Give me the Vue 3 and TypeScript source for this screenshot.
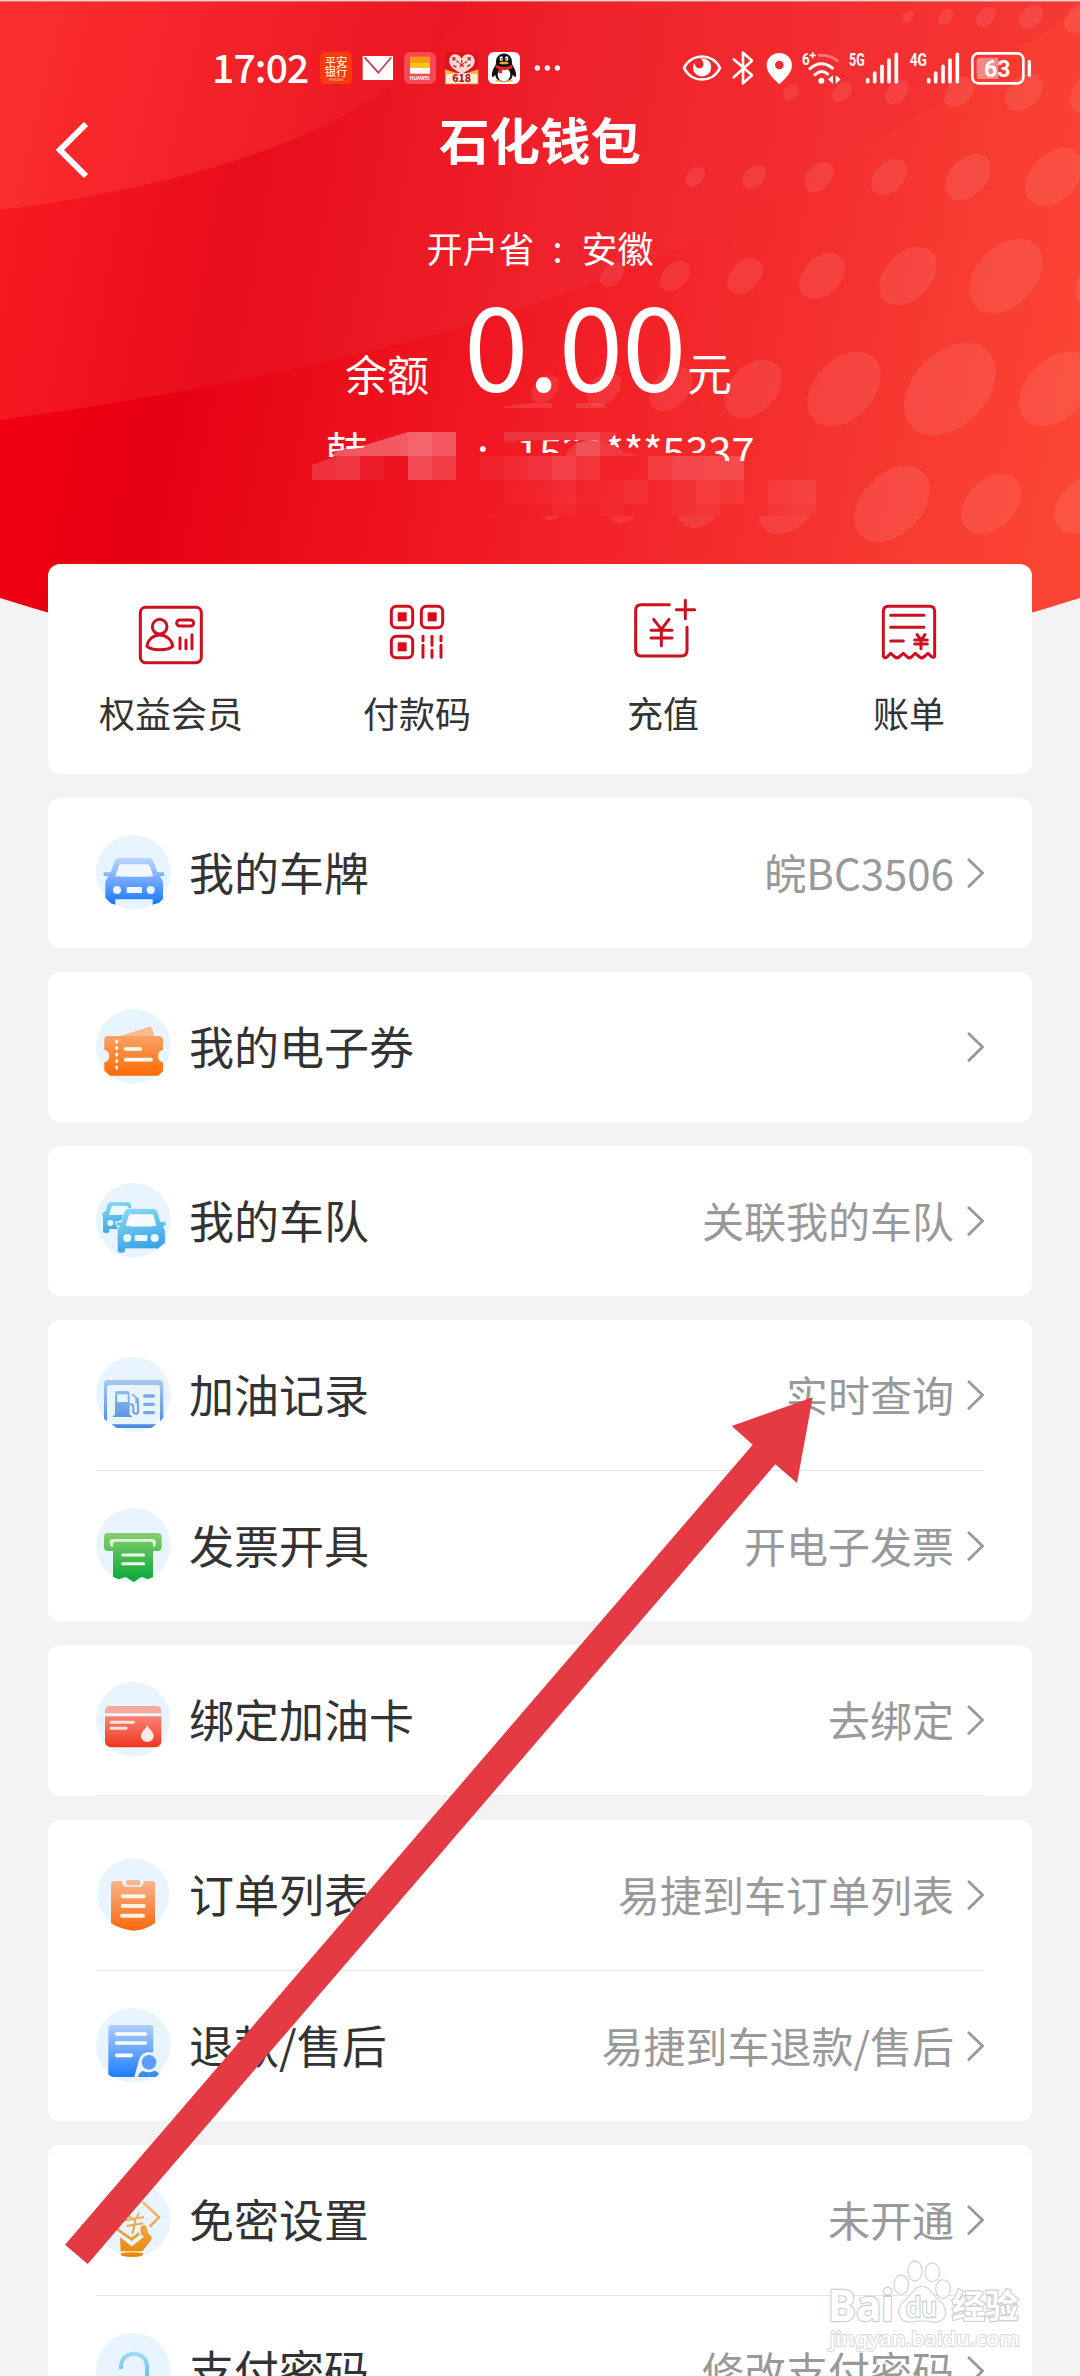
<script setup lang="ts">
interface Row {
  icon: string
  label: string
  value: string
}
interface Group {
  rows: Row[]
  trailingLine?: boolean
}

const quick = [
  { icon: 'member', label: '权益会员' },
  { icon: 'qr', label: '付款码' },
  { icon: 'topup', label: '充值' },
  { icon: 'bill', label: '账单' },
]

const groups: Group[] = [
  { rows: [{ icon: 'car', label: '我的车牌', value: '皖BC3506' }] },
  { rows: [{ icon: 'ticket', label: '我的电子券', value: '' }] },
  { rows: [{ icon: 'fleet', label: '我的车队', value: '关联我的车队' }] },
  {
    rows: [
      { icon: 'fuel', label: '加油记录', value: '实时查询' },
      { icon: 'invoice', label: '发票开具', value: '开电子发票' },
    ],
  },
  { rows: [{ icon: 'card', label: '绑定加油卡', value: '去绑定' }], trailingLine: true },
  {
    rows: [
      { icon: 'order', label: '订单列表', value: '易捷到车订单列表' },
      { icon: 'refund', label: '退款/售后', value: '易捷到车退款/售后' },
    ],
  },
  {
    rows: [
      { icon: 'nopwd', label: '免密设置', value: '未开通' },
      { icon: 'lock', label: '支付密码', value: '修改支付密码' },
    ],
  },
]

// halftone dots of the header: x, y, radius
const dots: number[][] = [
  [908, 17, 6], [946, 17, 8], [986, 17, 10], [1031, 17, 12], [1079, 18, 15],
  [791, 92, 8], [842, 92, 10], [897, 92, 12], [959, 92, 15], [1024, 92, 19], [1092, 92, 22],
  [695, 177, 10], [754, 177, 12], [819, 177, 15], [889, 177, 18], [968, 177, 23], [1054, 177, 29],
  [612, 275, 12], [675, 276, 15], [745, 276, 18], [822, 276, 23], [908, 276, 29], [1006, 276, 37], [1114, 276, 38],
  [545, 389, 14], [604, 389, 17], [671, 389, 22], [753, 389, 29], [844, 389, 37], [950, 389, 46], [1056, 389, 37],
  [892, 504, 38], [991, 504, 30], [1083, 504, 29],
]
const lowDots: number[][] = [
  [494, 504, 13], [555, 504, 16], [627, 504, 19], [702, 504, 24], [789, 504, 30],
]

// privacy mosaic: column, row, opacity
const cells: number[][] = [
  [2, 1, 0.05], [4, 1, 0.23], [5, 1, 0.16], [7, 1, 0.04], [8, 1, 0.07], [9, 1, 0.1], [10, 1, 0.15],
  [11, 1, 0.09], [14, 1, 0.1], [15, 1, 0.15], [16, 1, 0.15], [17, 1, 0.15], [1, 1, 0.17],
  [4, 0, 0.34], [5, 0, 0.29],
  [8, 2, 0.02], [9, 2, 0.03], [10, 2, 0.06], [11, 2, 0.02], [12, 2, 0.02], [13, 2, 0.06], [15, 2, 0.04],
  [16, 2, 0.08], [17, 2, 0.06], [19, 2, 0.05], [20, 2, 0.08],
  [10, 3, 0.04], [12, 3, 0.03], [15, 3, 0.04], [16, 3, 0.06], [19, 3, 0.04], [20, 3, 0.05],
]
</script>

<template>
  <div class="page">
    <svg class="hero" width="1080" height="700" viewBox="0 0 1080 700">
      <defs>
        <linearGradient id="base" gradientUnits="userSpaceOnUse" x1="0" y1="420" x2="1090" y2="640">
          <stop offset="0" stop-color="#f20012" />
          <stop offset="0.13" stop-color="#e60012" />
          <stop offset="0.25" stop-color="#ea0a18" />
          <stop offset="0.5" stop-color="#f21e26" />
          <stop offset="0.8" stop-color="#f63931" />
          <stop offset="1" stop-color="#fd4834" />
        </linearGradient>
        <linearGradient id="band" gradientUnits="userSpaceOnUse" x1="0" y1="180" x2="1000" y2="360">
          <stop offset="0" stop-color="#f71a20" />
          <stop offset="0.24" stop-color="#e80d1b" />
          <stop offset="0.55" stop-color="#ef222b" />
          <stop offset="1" stop-color="#f63833" />
        </linearGradient>
        <linearGradient id="corner" gradientUnits="userSpaceOnUse" x1="0" y1="0" x2="440" y2="110">
          <stop offset="0" stop-color="#fc2e2d" />
          <stop offset="1" stop-color="#ea1624" />
        </linearGradient>
        <clipPath id="shape"><path d="M0 0H1080V598Q540 770 0 598Z" /></clipPath>
        <clipPath id="low"><rect x="0" y="516" width="1080" height="60" /></clipPath>
      </defs>
      <g clip-path="url(#shape)">
        <rect width="1080" height="700" fill="url(#base)" />
        <path d="M0 0H1080V8Q950 96 792 190Q540 345 0 420Z" fill="url(#band)" />
        <path d="M0 0H468Q385 160 0 210Z" fill="url(#corner)" />
        <g fill="#fff" fill-opacity="0.085">
          <ellipse v-for="(d, i) in dots" :key="i" :rx="d[2] * 1.17" :ry="d[2] * 0.8"
            :transform="`translate(${d[0]} ${d[1]}) rotate(-46)`" />
          <g clip-path="url(#low)">
            <ellipse v-for="(d, i) in lowDots" :key="i" :rx="d[2] * 1.17" :ry="d[2] * 0.8"
              :transform="`translate(${d[0]} ${d[1]}) rotate(-46)`" />
          </g>
        </g>
        <rect width="1080" height="1.4" fill="#f3d6d6" />
      </g>
    </svg>

    <header class="top">
      <div class="status">
        <span class="time">17:02</span>
        <svg width="250" height="60" viewBox="345 0 750 180">
          <rect x="360" y="36" width="96" height="96" rx="16" fill="#fb3a0c" />
          <text class="cn" x="408" y="78" font-size="34" font-weight="500" fill="#ffe9c8" text-anchor="middle">平安</text>
          <text class="cn" x="408" y="109" font-size="34" font-weight="500" fill="#ffe9c8" text-anchor="middle">银行</text>
          <text class="cn" x="408" y="124" font-size="12" fill="#ffd0a0" text-anchor="middle">PINGAN</text>
          <rect x="488" y="48" width="91" height="72" fill="#fff" />
          <path d="M494 52L535 98L574 52" fill="none" stroke="#c23b4c" stroke-width="5" />
          <rect x="612" y="36" width="96" height="96" rx="18" fill="#fb4858" />
          <rect x="630" y="50" width="60" height="17" fill="#f59a10" />
          <rect x="630" y="67" width="60" height="17" fill="#fcc419" />
          <rect x="630" y="84" width="60" height="17" fill="#fff" />
          <text class="cn" x="659" y="121" font-size="15" font-weight="700" fill="#fff" text-anchor="middle">HUAWEI</text>
          <rect x="735" y="36" width="100" height="97" fill="#e01420" />
          <path d="M735 88L785 104L835 88V133H735Z" fill="#f7b53c" />
          <path d="M738 103L785 99L832 103V130H738Z" fill="#fbeee0" />
          <path d="M785 56C772 34 745 42 748 66C750 84 770 92 785 102C800 92 822 84 824 66C826 42 797 34 785 56Z" fill="#f7d9d6" />
          <path d="M757 52l9 9m-9 0l9-9M803 52l9 9m-9 0l9-9M779 70l12 10m-12 0l12-10M760 76l9 6M802 80l9-6M785 60v8M770 62l6 6M800 64l-6 6" stroke="#d8202c" stroke-width="4" />
          <text class="cn" x="785" y="127" font-size="31" font-weight="900" fill="#b3141c" text-anchor="middle">618</text>
          <rect x="864" y="36" width="96" height="96" rx="18" fill="#fff" />
          <path d="M888 72C884 30 940 30 936 72C944 84 950 98 948 110C944 112 940 106 938 104C938 132 886 132 886 104C884 106 880 112 876 110C874 98 880 84 888 72Z" fill="#121212" />
          <ellipse cx="912" cy="104" rx="19" ry="21" fill="#fff" />
          <ellipse cx="904" cy="56" rx="5" ry="7" fill="#fff" /><ellipse cx="920" cy="56" rx="5" ry="7" fill="#fff" />
          <circle cx="905" cy="57" r="2.4" /><circle cx="919" cy="57" r="2.4" />
          <ellipse cx="912" cy="69" rx="14" ry="4" fill="#f5a623" />
          <path d="M887 74Q912 88 937 74L938 84Q920 92 906 90V100H896V87L886 83Z" fill="#e5242c" />
          <path d="M884 124Q894 114 906 125ZM918 125Q930 114 940 124Z" fill="#f5a623" />
          <circle cx="1012" cy="84" r="8" fill="#fff" /><circle cx="1042" cy="84" r="8" fill="#fff" /><circle cx="1072" cy="84" r="8" fill="#fff" />
        </svg>
        <svg class="right" width="380" height="60" viewBox="0 0 1140 180">
          <path d="M42 84C64 38 128 38 150 84C128 130 64 130 42 84Z" fill="none" stroke="#fff" stroke-width="8" stroke-linejoin="round" />
          <path d="M92 56C117 54 126 72 123 88C118 112 84 118 71 94C68 86 69 76 73 68C76 82 84 88 94 84C104 78 102 64 92 56Z" fill="#fff" />
          <path d="M191 58L246 106L219 130V38L246 62L191 112" fill="none" stroke="#fff" stroke-width="8" stroke-linejoin="round" stroke-linecap="round" />
          <path fill-rule="evenodd" d="M328 39C305 39 290 56 290 76C290 99 312 118 328 133C344 118 366 99 366 76C366 56 351 39 328 39ZM328 62A13 13 0 1 1 328 88A13 13 0 1 1 328 62Z" fill="#fff" />
          <g fill="none" stroke="#fff" stroke-width="9" stroke-linecap="round">
            <path d="M420 86Q453 58 487 84" /><path d="M435 104Q454 86 473 102" />
            <path d="M447 46Q478 44 502 62" stroke-opacity="0.35" />
          </g>
          <circle cx="454" cy="122" r="9" fill="#fff" />
          <path d="M489 106V132L474 118ZM497 106V132L512 118Z" fill="#fff" />
          <text class="en" x="396" y="76" font-size="51" textLength="23" lengthAdjust="spacingAndGlyphs">6</text>
          <path d="M428 37V55M419 46H437" stroke="#fff" stroke-width="5" />
          <text class="en" x="537" y="79" font-size="55" textLength="47" lengthAdjust="spacingAndGlyphs">5G</text>
          <text class="en" x="719" y="79" font-size="55" textLength="52" lengthAdjust="spacingAndGlyphs">4G</text>
          <g v-for="o in [0, 183]" :key="o" stroke="#fff" stroke-width="11" stroke-linecap="round">
            <path :d="`M${593 + o} 119V125M${614 + o} 99V125M${636 + o} 79V125M${657 + o} 60V125M${679 + o} 43V125`" />
          </g>
          <rect x="907" y="40" width="153" height="90" rx="18" fill="none" stroke="#fff" stroke-width="8" />
          <path d="M930 53H985V117H930Q920 117 920 107V63Q920 53 930 53Z" fill="#fff" fill-opacity="0.4" />
          <path d="M1078 64V106" stroke="#fff" stroke-width="10" stroke-linecap="round" />
          <text class="en" x="982" y="110" font-size="72" text-anchor="middle" textLength="80" lengthAdjust="spacingAndGlyphs">63</text>
        </svg>
      </div>

      <div class="titlebar">
        <svg class="back" width="50" height="70" viewBox="0 0 50 70">
          <path d="M38 9L12 35L38 61" fill="none" stroke="#fff" stroke-width="6" />
        </svg>
        <h1>石化钱包</h1>
      </div>

      <div class="province"><span>开户省</span><span class="sep">:</span><span>安徽</span></div>
      <div class="balance"><span class="cap">余额</span><span class="amount">0.00</span><span class="unit">元</span></div>
      <div class="holder"><span class="name">韩</span><span class="colon">:</span><span class="num">152****5337</span></div>

      <svg class="mosaic" width="560" height="120" viewBox="290 400 560 120">
        <rect v-for="(c, i) in cells" :key="i" :x="312 + c[0] * 24" :y="432 + c[1] * 24" width="24"
          :height="c[1] === 3 ? 12 : 24" fill="#fff" :fill-opacity="c[2]" />
        <path d="M312 480V465L336 456V480Z" fill="#fff" fill-opacity="0.15" />
        <path d="M333 456L337 449L365 445L408 432V456Z" fill="#fff" fill-opacity="0.3" />
        <path d="M504 432H618L606 443L594 440H558L525 441L504 444Z" fill="#ee2932" />
        <path d="M504 432H618L606 443L594 440H504Z" fill="#fff" fill-opacity="0.06" />
        <path d="M576 432H600V441L576 440Z" fill="#fff" fill-opacity="0.1" />
        <path d="M565 456Q574 440 590 440Q612 442 626 453L640 456Z" fill="#f03a42" />
        <path d="M576 456V443L590 440L600 441V456Z" fill="#fff" fill-opacity="0.12" />
        <path d="M499 408Q515 404 532 403H552V408ZM576 403H600L608 408H576Z" fill="#fff" fill-opacity="0.12" />
      </svg>
    </header>

    <main>
      <section class="card quick">
        <div v-for="q in quick" :key="q.label" class="q">
          <svg v-if="q.icon === 'member'" class="qi" viewBox="273 99 240 240">
            <rect x="301" y="142" width="183" height="166" rx="16" />
            <circle cx="359" cy="200" r="22" />
            <path d="M321 259C323 238 341 225 359 225C378 225 396 238 398 259C385 273 334 273 321 259Z" />
            <rect x="410" y="180" width="51" height="18" rx="9" />
            <path d="M420 233V266M438 240V266M456 224V266" />
          </svg>
          <svg v-else-if="q.icon === 'qr'" class="qi" viewBox="1011 99 240 240">
            <rect x="1054" y="139" width="64" height="64" rx="15" /><rect x="1144" y="139" width="64" height="64" rx="15" />
            <rect x="1054" y="229" width="64" height="64" rx="15" />
            <g class="solid"><rect x="1073" y="157" width="27" height="27" /><rect x="1163" y="157" width="27" height="27" /><rect x="1073" y="247" width="27" height="27" /></g>
            <path d="M1149 229V242M1149 256V292M1176 229V256M1176 271V292M1203 229V242M1203 256V292" />
          </svg>
          <svg v-else-if="q.icon === 'topup'" class="qi" viewBox="249 99 240 240">
            <path d="M388 134H304Q287 134 287 151V271Q287 288 304 288H424Q441 288 441 271V202" />
            <path d="M409 149H464M436 121V176M341 178L364 208L387 178M333 211H396M333 234H396M364 211V257" />
          </svg>
          <svg v-else class="qi" viewBox="987 99 240 240">
            <path d="M1030 289V154Q1030 139 1045 139H1169Q1184 139 1184 154V289Q1180 295 1174 289L1164 280L1151 291Q1145 296 1139 291L1126 280L1114 291Q1108 296 1102 291L1090 280L1077 291Q1071 296 1065 291L1052 280L1041 291Q1034 296 1030 289Z" />
            <path d="M1052 166H1152M1052 202H1152M1052 243H1090" />
            <path d="M1131 224L1143 240L1155 224M1124 240H1162M1124 252H1162M1143 240V266" />
          </svg>
          <span>{{ q.label }}</span>
        </div>
      </section>

      <section v-for="(g, gi) in groups" :key="gi" class="card list" :class="{ trailing: g.trailingLine }">
        <div v-for="r in g.rows" :key="r.label" class="row">
          <svg v-if="r.icon === 'car'" class="ri" viewBox="48 45 225 225">
            <linearGradient id="gcar" x1="0" y1="0" x2="0" y2="1"><stop offset="0" stop-color="#bdd6ff" /><stop offset="1" stop-color="#1a75ff" /></linearGradient>
            <circle cx="160" cy="157" r="112" class="disc" />
            <path d="M118 114H206Q216 114 220 124L232 157H252V168H240L249 186V236L238 248L218 254V238H106V254L92 250L76 234V186L85 168H71V157H92L104 124Q108 114 118 114Z" fill="url(#gcar)" />
            <path d="M123 133H202Q208 133 210 139L220 169Q170 172 106 169L116 139Q118 133 123 133Z" fill="#f3f8ff" />
            <circle cx="111" cy="210" r="12" fill="#eef6ff" /><circle cx="212" cy="210" r="12" fill="#eef6ff" />
            <rect x="140" y="201" width="46" height="18" rx="3" fill="#eef6ff" />
          </svg>
          <svg v-else-if="r.icon === 'ticket'" class="ri" viewBox="48 567 225 225">
            <linearGradient id="gtk" x1="0" y1="0" x2="0" y2="1"><stop offset="0" stop-color="#f9a265" /><stop offset="1" stop-color="#ff6a05" /></linearGradient>
            <circle cx="160" cy="679" r="112" class="disc" />
            <path d="M120 648L205 621Q214 619 217 627L224 650Z" fill="#fabb90" />
            <path d="M84 648H236Q249 648 249 660V690A19 19 0 0 0 249 727V753L235 767H90L73 752V727A19 19 0 0 0 73 690V660Q73 648 84 648Z" fill="url(#gtk)" />
            <path d="M110 663V752" stroke="#fff3e8" stroke-width="9" stroke-linecap="round" stroke-dasharray="3 16.5" />
            <path d="M137 687H181M137 719H213" stroke="#fff" stroke-width="11" stroke-linecap="round" />
          </svg>
          <svg v-else-if="r.icon === 'fleet'" class="ri" viewBox="48 1089 225 225">
            <linearGradient id="gfl" x1="0" y1="0" x2="0.3" y2="1"><stop offset="0" stop-color="#8bdcf0" /><stop offset="1" stop-color="#3aa4e8" /></linearGradient>
            <circle cx="160" cy="1201" r="112" class="disc" />
            <path d="M91 1147H143Q152 1147 154 1162L140 1175L128 1200L106 1205L114 1227H88V1237L78 1240L69 1236V1192L66 1180L78 1172Q82 1147 91 1147Z" fill="url(#gfl)" />
            <path d="M96 1157H141L149 1167L134 1174L128 1185H86Z" fill="#eef8ff" />
            <circle cx="91" cy="1209" r="9" fill="#eef8ff" /><path d="M107 1203H114V1214H107Z" fill="#eef8ff" />
            <path d="M145 1166H220Q230 1166 234 1179L242 1205H257Q260 1212 256 1218H250L256 1234V1268L230 1290V1286H136V1293L131 1299H117L112 1293V1228L118 1218H108V1206H124L132 1180Q135 1166 145 1166Z" fill="url(#gfl)" stroke="#e8f5ff" stroke-width="2" />
            <path d="M152 1183H216Q220 1183 222 1190L229 1218Q180 1221 137 1218L145 1190Q147 1183 152 1183Z" fill="#f6fbff" />
            <circle cx="142" cy="1254" r="12" fill="#eef8ff" /><circle cx="224" cy="1254" r="12" fill="#eef8ff" />
            <rect x="164" y="1245" width="38" height="18" rx="3" fill="#eef8ff" />
          </svg>
          <svg v-else-if="r.icon === 'fuel'" class="ri" viewBox="48 51 225 225">
            <linearGradient id="gfu" gradientUnits="userSpaceOnUse" x1="0" y1="120" x2="0" y2="265"><stop offset="0" stop-color="#a9c9f2" /><stop offset="1" stop-color="#4688dc" /></linearGradient>
            <circle cx="160" cy="163" r="112" class="disc" />
            <path d="M83 120H238Q250 120 250 132V235L240 244V143Q240 135 232 135H89Q81 135 81 143V244L72 236V132Q72 120 83 120ZM95 253H229L214 264H110Z" fill="url(#gfu)" />
            <path fill-rule="evenodd" d="M112 153H142Q149 153 149 160V225L156 227V231H99V227L105 225V160Q105 153 112 153ZM112 163V186H143V163Z" fill="url(#gfu)" />
            <path d="M149 193H155Q160 194 160 203V215Q162 222 170 221Q176 219 174 208V178L157 163" fill="none" stroke="url(#gfu)" stroke-width="6" />
            <path d="M166 174L174 180V192L166 190Z" fill="url(#gfu)" />
            <path d="M194 168H220M194 193H220M194 218H220" fill="none" stroke="#79a8e6" stroke-width="10" stroke-linecap="round" />
          </svg>
          <svg v-else-if="r.icon === 'invoice'" class="ri" viewBox="48 504 225 225">
            <linearGradient id="giv" gradientUnits="userSpaceOnUse" x1="0" y1="579" x2="0" y2="726"><stop offset="0" stop-color="#86cf6b" /><stop offset="1" stop-color="#07a638" /></linearGradient>
            <circle cx="160" cy="616" r="112" class="disc" />
            <rect x="72" y="579" width="173" height="54" rx="12" fill="url(#giv)" />
            <path d="M99 597H218Q228 597 228 609Q228 621 218 621H99Q89 621 89 609Q89 597 99 597Z" fill="#d9f5dc" />
            <path d="M99 614Q99 605 108 605H210Q219 605 219 614V711L203 718L185 710L161 726L137 711L116 718L99 710Z" fill="url(#giv)" />
            <path d="M128 645H191M128 671H191" stroke="#e9fbe9" stroke-width="9" stroke-linecap="round" />
          </svg>
          <svg v-else-if="r.icon === 'card'" class="ri" viewBox="48 1026 225 225">
            <linearGradient id="gcd" x1="0" y1="0" x2="0" y2="1"><stop offset="0" stop-color="#fb9f94" /><stop offset="1" stop-color="#f1341f" /></linearGradient>
            <circle cx="160" cy="1138" r="112" class="disc" />
            <rect x="75" y="1098" width="169" height="124" rx="18" fill="url(#gcd)" />
            <rect x="75" y="1098" width="169" height="28" rx="14" fill="#fba89c" />
            <path d="M75 1124H244" stroke="#f2f7fb" stroke-width="9" />
            <path d="M93 1147H160M93 1165H138" stroke="#ffe4e0" stroke-width="9" stroke-linecap="round" />
            <path d="M202 1156C209 1170 221 1176 221 1187C221 1211 183 1211 183 1187C183 1176 195 1170 202 1156Z" fill="#ffecea" />
          </svg>
          <svg v-else-if="r.icon === 'order'" class="ri" viewBox="48 0 225 225">
            <linearGradient id="god" x1="0" y1="0" x2="0" y2="1"><stop offset="0" stop-color="#f9b58b" /><stop offset="1" stop-color="#f8680a" /></linearGradient>
            <circle cx="160" cy="112" r="108" class="disc" />
            <path d="M103 72H216Q225 72 225 82V199Q192 221 160 221Q126 219 93 199V82Q93 72 103 72Z" fill="url(#god)" />
            <rect x="127" y="62" width="64" height="27" rx="13" fill="#e8f5fe" />
            <rect x="138" y="69" width="43" height="16" rx="8" fill="#f9b58b" />
            <path d="M128 118H191M128 147H191M126 176H189" stroke="#fff1e4" stroke-width="12" stroke-linecap="round" />
          </svg>
          <svg v-else-if="r.icon === 'refund'" class="ri" viewBox="48 0 225 225">
            <linearGradient id="grf" x1="0" y1="0" x2="0" y2="1"><stop offset="0" stop-color="#b0cffc" /><stop offset="1" stop-color="#1d7cff" /></linearGradient>
            <circle cx="160" cy="112" r="112" class="disc" />
            <path d="M94 51H211Q220 51 220 60V132L176 160L163 207H97L85 200V60Q85 51 94 51Z" fill="url(#grf)" />
            <path d="M110 78H196M110 105H196M110 142H154" stroke="#fff" stroke-width="11" stroke-linecap="round" />
            <circle cx="207" cy="163" r="31" fill="#e8f5fe" />
            <path d="M170 210Q170 187 190 182Q206 192 225 181Q238 186 242 198L228 210Z" fill="#e8f5fe" />
            <circle cx="207" cy="163" r="22" fill="#5d9df8" />
            <path d="M174 207Q176 193 190 189Q206 197 223 188Q233 190 237 197L228 207Z" fill="#3b8afa" />
          </svg>
          <svg v-else-if="r.icon === 'nopwd'" class="ri" viewBox="168 186 225 225">
            <linearGradient id="gnp" gradientUnits="userSpaceOnUse" x1="0" y1="220" x2="0" y2="410"><stop offset="0" stop-color="#f8c690" /><stop offset="1" stop-color="#ec8600" /></linearGradient>
            <circle cx="280" cy="298" r="112" class="disc" />
            <path d="M308 246L357 292L329 320M232 328L275 358L298 340" fill="none" stroke="url(#gnp)" stroke-width="8" />
            <path d="M248 302L312 291M264 287L286 303M297 278L284 302M260 318L310 310M286 303L277 342" fill="none" stroke="url(#gnp)" stroke-width="6" />
            <path d="M240 352L276 376L306 350L300 325Q310 308 320 320L324 338L336 352L332 362L307 394H242Z" fill="url(#gnp)" />
            <path d="M244 350L275 376L310 348" fill="none" stroke="#eaf5fd" stroke-width="5" />
            <path d="M242 400Q275 394 309 400L306 408Q276 414 244 407Z" fill="url(#gnp)" />
          </svg>
          <svg v-else class="ri" viewBox="168 639 225 225">
            <linearGradient id="glk" gradientUnits="userSpaceOnUse" x1="0" y1="695" x2="0" y2="800"><stop offset="0" stop-color="#a2dcf5" /><stop offset="1" stop-color="#4ab8ec" /></linearGradient>
            <circle cx="280" cy="751" r="112" class="disc" />
            <path d="M243 747V741C243 688 321 688 321 741V790" fill="none" stroke="url(#glk)" stroke-width="12" />
          </svg>
          <span class="label">{{ r.label }}</span>
          <span class="value">{{ r.value }}</span>
          <svg class="chev" width="20" height="34" viewBox="0 0 20 34"><path d="M4 3L18.5 17L4 31.3" fill="none" stroke="#999" stroke-width="2.8" /></svg>
        </div>
      </section>
    </main>

    <svg class="arrow" width="1080" height="2376" viewBox="0 0 1080 2376">
      <path d="M812.7 1397.3L731.7 1426L752.7 1444.7L65 2244.7L87.7 2264L775.3 1464.3L797 1483Z" fill="#e33a44" />
    </svg>

    <svg class="mark" width="210" height="110" viewBox="430 290 630 330">
      <g fill="#fff" stroke="#d4d4d4" stroke-width="4">
        <ellipse cx="665" cy="373" rx="22" ry="29" /><ellipse cx="706" cy="332" rx="21" ry="30" />
        <ellipse cx="758" cy="336" rx="22" ry="28" /><ellipse cx="790" cy="386" rx="22" ry="28" />
        <path d="M727 378C745 378 752 392 764 406C778 422 798 430 798 455C798 484 770 489 750 484C735 481 720 481 705 484C680 489 658 480 657 455C657 430 678 420 690 406C702 392 708 378 727 378Z" />
      </g>
      <g class="out">
        <text x="445" y="482" font-size="130" textLength="198" lengthAdjust="spacingAndGlyphs">Bai</text>
        <text class="du" x="678" y="470" font-size="80" textLength="94" lengthAdjust="spacingAndGlyphs">du</text>
        <text class="cnb" x="816" y="474" font-size="100" textLength="200" lengthAdjust="spacingAndGlyphs">经验</text>
        <text class="url" x="450" y="558" font-size="60" textLength="570" lengthAdjust="spacingAndGlyphs">jingyan.baidu.com</text>
      </g>
    </svg>
  </div>
</template>

<style>
body {
  margin: 0;
  background: #f3f3f3;
}
</style>

<style scoped>
.page {
  position: relative;
  width: 1080px;
  height: 2376px;
  overflow: hidden;
  background: #f3f3f3;
  font-family: "Noto Sans CJK SC", "Noto Sans", sans-serif;
  color: #333;
}
svg { display: block; flex: none; }
.hero, .arrow { position: absolute; left: 0; top: 0; }
.arrow, .mark { pointer-events: none; }
.mark { position: absolute; left: 823px; top: 2257px; opacity: 0.9; }
.out { fill: #fff; stroke: #c9c9c9; stroke-width: 7; paint-order: stroke; font-family: "Noto Sans", sans-serif; font-weight: 700; }
.out .du { font-weight: 500; }
.out .cnb { font-family: "Noto Sans CJK SC", sans-serif; }
.out .url { font-weight: 500; stroke: #d6d6d6; stroke-width: 6; }
.cn { font-family: "Noto Sans CJK SC", sans-serif; }
.en { font-family: Roboto, sans-serif; font-weight: 700; fill: #fff; }

.top {
  position: relative;
  height: 564px;
  box-sizing: border-box;
  padding-top: 40px;
  color: #fff;
}
.status { display: flex; height: 60px; padding-left: 212px; }
.time { width: 103px; font-size: 39px; line-height: 52px; letter-spacing: -0.8px; font-weight: 500; }
.right { margin-left: 105px; }
.titlebar { display: flex; height: 100px; padding: 0 48px; }
.back { margin-top: 15px; }
h1 { flex: 1; margin: 0 50px 0 0; font-size: 50.5px; line-height: 76px; font-weight: 700; text-align: center; }
.province { display: flex; justify-content: center; height: 44px; margin-top: 25px; font-size: 36px; line-height: 44px; }
.sep { width: 46px; text-align: center; padding-right: 1px; }
.balance { display: flex; align-items: baseline; height: 120px; margin-top: 16px; padding-left: 345px; line-height: 110px; }
.cap { width: 119px; font-size: 42px; }
.amount { width: 223px; font-size: 116px; letter-spacing: -1px; }
.unit { font-size: 45px; }
.holder {
  display: flex;
  height: 50px;
  margin-top: 25px;
  padding-left: 326px;
  font-size: 42px;
  line-height: 40px;
  clip-path: polygon(326px 1px, 326px 28px, 333px 27px, 335px 21px, 367px 17px, 408px 2px, 479px 2px, 479px 23px, 565px 23px, 570px 15px, 579px 10px, 597px 11px, 626px 23px, 711px 23px, 724px 31px, 758px 31px, 758px 0);
}
.name { width: 151px; }
.colon { width: 39px; }
.num { letter-spacing: -0.3px; }
.mosaic { position: absolute; left: 290px; top: 400px; }

main { position: relative; display: flex; flex-direction: column; gap: 24px; }
.card { flex: none; margin: 0 48px; border-radius: 12px; background: #fff; }
.quick { display: flex; height: 210px; }
.q { flex: 1; display: flex; flex-direction: column; align-items: center; font-size: 36px; line-height: 44px; padding-top: 29px; }
.q span { margin-top: 17px; }
.qi { width: 80px; height: 80px; fill: none; stroke: #cb1020; stroke-width: 9; stroke-linecap: round; stroke-linejoin: round; }
.solid { fill: #e30613; stroke: none; }
.list { padding: 0 48px; }
.row { display: flex; height: 150px; line-height: 147px; }
.row + .row { border-top: 1px solid #e4e4e4; }
.trailing .row { border-bottom: 1px solid #ececec; }
.ri { width: 75px; height: 75px; margin-top: 37px; }
.disc { fill: #e8f5fe; }
.label { margin-left: 18px; font-size: 45px; white-space: nowrap; }
.value { flex: 1; text-align: right; font-size: 42px; color: #999; white-space: nowrap; }
.chev { margin: 58px 0 0 10px; }
</style>
